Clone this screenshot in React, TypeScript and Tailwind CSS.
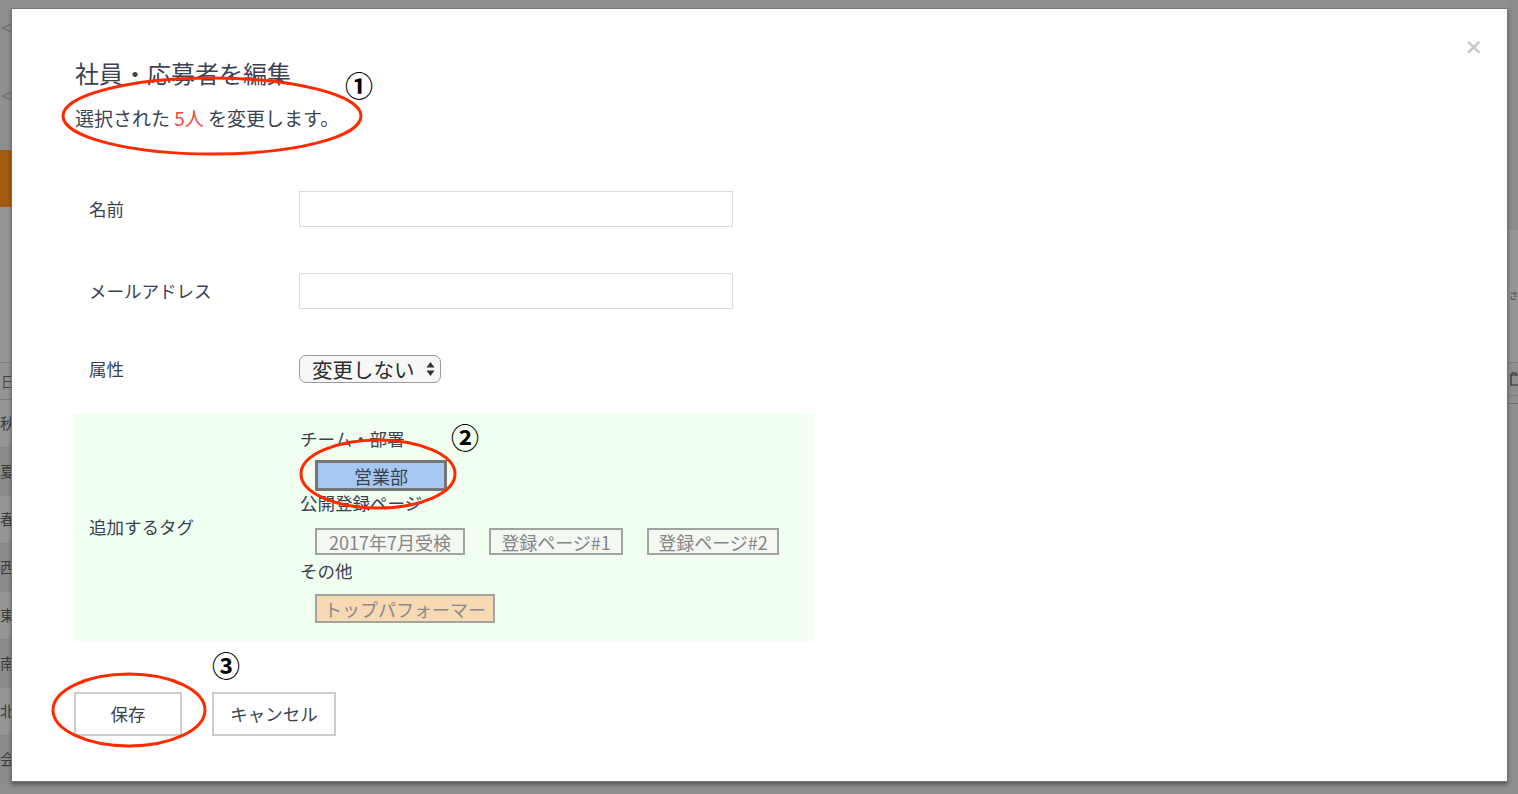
import React from "react";

const jp = "font-['Hiragino_Sans','Noto_Sans_CJK_JP','Noto_Sans',sans-serif]";

function Tag({ label, w, tone }: { label: string; w: string; tone: "team" | "page" | "other" }) {
  const styles = {
    team: "bg-[#a6c8f2] border-[3px] border-[#767676] text-[#3a4150] h-[31px]",
    page: "bg-[#f4f8f3] border-2 border-[#a0a4a0] text-[#858585] h-[27px]",
    other: "bg-[#f7d9b3] border-2 border-[#a3a3a3] text-[#8a8a8a] h-[29px]",
  }[tone];
  return (
    <div className={`${styles} ${w} flex items-center justify-center text-[18px] leading-none`}>
      {label}
    </div>
  );
}

function FormRow({ label, children }: { label: string; children: React.ReactNode }) {
  return (
    <div className="flex items-center">
      <div className="w-[225px] pl-[15px] text-[17.5px] text-[#3a4150]">{label}</div>
      {children}
    </div>
  );
}

export default function App() {
  const leftRows = ["秋", "夏", "春", "西", "東", "南", "北", "会"];

  return (
    <div className={`relative w-[1518px] h-[794px] overflow-hidden bg-[#8f8f8f] ${jp}`}>
      {/* Backdrop page (dimmed) */}
      <div className="flex h-full justify-between">
        <div className="w-[11px] flex flex-col">
          <div className="h-[12px]" />
          <div className="h-[30px] text-[#6e6e6e] text-[18px] leading-[30px] pl-[1px]">&lt;</div>
          <div className="h-[38px]" />
          <div className="h-[30px] text-[#6e6e6e] text-[18px] leading-[30px] pl-[1px]">&lt;</div>
          <div className="h-[40px]" />
          <div className="h-[57px] bg-[#a35b0e]" />
          <div className="h-[155px] bg-[#969696]" />
          <div className="h-[38px] border-y border-[#7b7b7b] bg-[#949494] text-[14px] leading-[36px] text-[#444] pl-[1px]">日</div>
          {leftRows.map((r, i) => (
            <div
              key={r}
              className={`h-[48px] flex items-center text-[15px] text-[#3c3c3c] border-b border-[#888] ${
                i % 2 ? "bg-[#8c8c8c]" : "bg-[#959595]"
              }`}
            >
              <span>{r}</span>
            </div>
          ))}
        </div>
        <div className="w-[10px] flex flex-col">
          <div className="h-[230px] bg-[#8c8c8c]" />
          <div className="h-[132px] bg-[#959595] text-[9px] leading-[132px] text-[#444] pl-[1px]">さ</div>
          <div className="h-[34px] border-y border-[#7c7c7c] flex items-center pl-[1px]">
            <svg width="9" height="14" viewBox="0 0 9 14">
              <path d="M1 3 H9 M3 3 V1 H7 V3 M2 3 V13 H9" fill="none" stroke="#333" strokeWidth="1.2" />
            </svg>
          </div>
          <div className="h-[8px] border-b border-[#6f6f6f]" />
        </div>
      </div>

      {/* Modal */}
      <div className="absolute left-[11px] top-[8px] w-[1497px] h-[774px] bg-white border border-[#767676] shadow-[0_3px_4px_rgba(0,0,0,0.35)] pl-[62px] pt-[49px]">
        <div className="absolute right-[24px] top-[27px] text-[#c9c9c9] text-[22px] font-bold leading-none font-['DejaVu_Sans',sans-serif]">
          ×
        </div>

        <h1 className="ml-[1px] text-[24px] leading-[30px] text-[#3b4250]">社員・応募者を編集</h1>
        <p className="ml-[1px] mt-[18px] text-[19px] leading-[24px] text-[#3b4250]">
          選択された <span className="text-[#ee4a3c]">5人</span> を変更します。
        </p>

        <div className="mt-[61px] w-[740px] flex flex-col">
          <FormRow label="名前">
            <div className="w-[434px] h-[36px] border border-[#dcdcdc] bg-white" />
          </FormRow>
          <div className="h-[46px]" />
          <FormRow label="メールアドレス">
            <div className="w-[434px] h-[36px] border border-[#dcdcdc] bg-white" />
          </FormRow>
          <div className="h-[46px]" />
          <FormRow label="属性">
            <div className="w-[142px] h-[28px] rounded-[7px] border-[1.5px] border-[#9a9a9a] bg-[#f7f7f7] flex items-center justify-between pl-[12px] pr-[5px] text-[20.5px] text-[#2a2a2a]">
              <span>変更しない</span>
              <svg width="9" height="16" viewBox="0 0 9 16">
                <path d="M4.5 1 L8.5 6.5 H0.5 Z" fill="#333" />
                <path d="M4.5 15 L8.5 9.5 H0.5 Z" fill="#333" />
              </svg>
            </div>
          </FormRow>

          <div className="mt-[31px] h-[227px] bg-[#f0fff0] flex items-center">
            <div className="w-[225px] pl-[15px] text-[17.5px] text-[#3a4150]">追加するタグ</div>
            <div className="self-start pt-[13px] pl-[1px] flex flex-col text-[17.5px] text-[#3a4150]">
              <div className="leading-[24px]">チーム・部署</div>
              <div className="mt-[9px] pl-[15px]">
                <Tag label="営業部" w="w-[132px]" tone="team" />
              </div>
              <div className="leading-[24px]">公開登録ページ</div>
              <div className="mt-[13px] pl-[15px] flex gap-[24px]">
                <Tag label="2017年7月受検" w="w-[150px]" tone="page" />
                <Tag label="登録ページ#1" w="w-[134px]" tone="page" />
                <Tag label="登録ページ#2" w="w-[132px]" tone="page" />
              </div>
              <div className="mt-[4px] leading-[24px]">その他</div>
              <div className="mt-[11px] pl-[15px]">
                <Tag label="トップパフォーマー" w="w-[180px]" tone="other" />
              </div>
            </div>
          </div>

          <div className="mt-[51px] flex gap-[30px]">
            <button className="w-[108px] h-[44px] border-2 border-[#cdcdcd] bg-white text-[17.5px] text-[#3b4250]">
              保存
            </button>
            <button className="w-[124px] h-[44px] border-2 border-[#cdcdcd] bg-white text-[17.5px] text-[#3b4250]">
              キャンセル
            </button>
          </div>
        </div>
      </div>

      {/* Annotations */}
      <svg className="absolute inset-0 pointer-events-none" width="1518" height="794">
        <ellipse cx="212" cy="116" rx="149" ry="38" fill="none" stroke="#ff2a00" strokeWidth="3" />
        <ellipse cx="378" cy="474" rx="77" ry="34" fill="none" stroke="#ff2a00" strokeWidth="3" />
        <ellipse cx="129" cy="710" rx="76" ry="36" fill="none" stroke="#ff2a00" strokeWidth="3" />
      </svg>
      <div className="absolute left-[345px] top-[68px] text-[28px] leading-[34px] font-bold text-black">①</div>
      <div className="absolute left-[451px] top-[420px] text-[28px] leading-[34px] font-bold text-black">②</div>
      <div className="absolute left-[212px] top-[648px] text-[28px] leading-[34px] font-bold text-black">③</div>
    </div>
  );
}
